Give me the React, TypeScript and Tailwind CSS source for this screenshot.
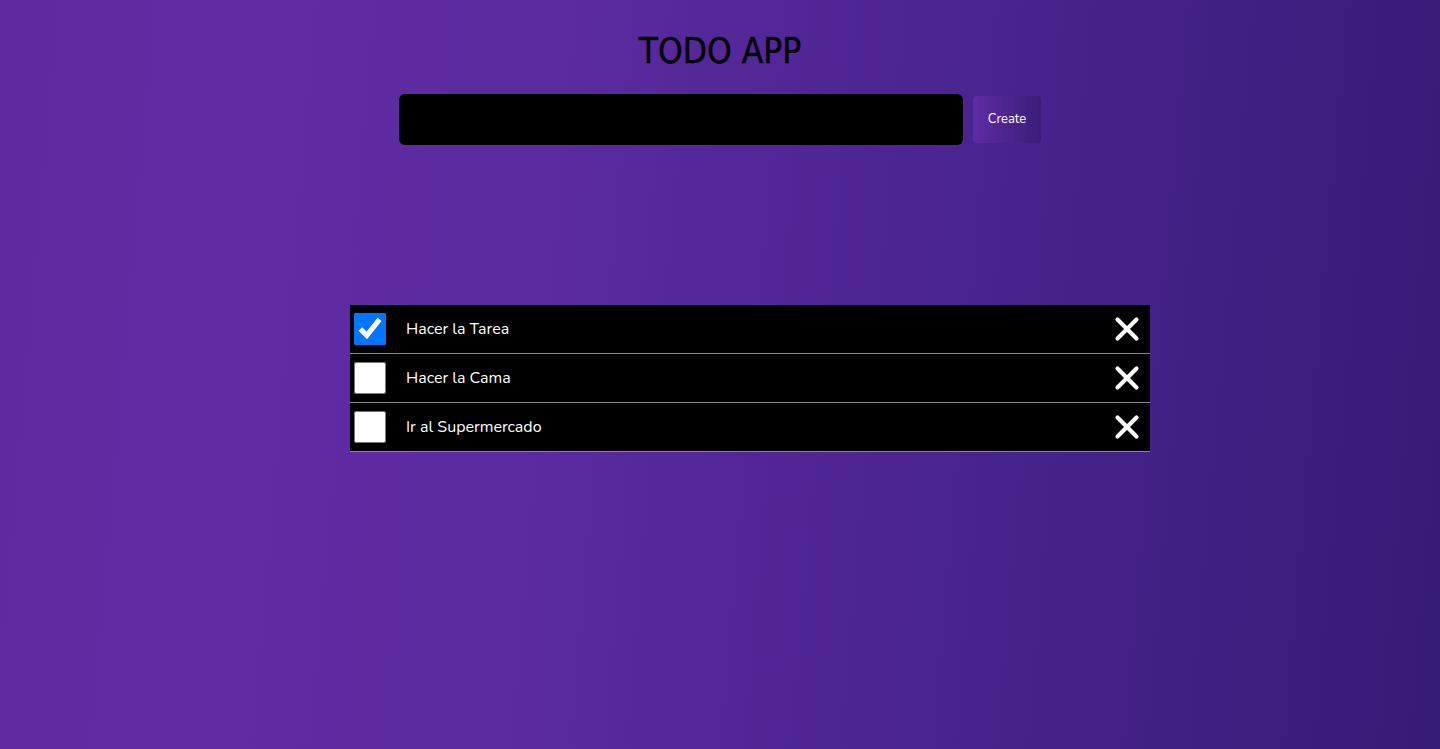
import React, { useState } from "react";

type Todo = { id: number; text: string; done: boolean };

const initial: Todo[] = [
  { id: 1, text: "Hacer la Tarea", done: true },
  { id: 2, text: "Hacer la Cama", done: false },
  { id: 3, text: "Ir al Supermercado", done: false },
];

function CloseIcon() {
  return (
    <svg width="26" height="26" viewBox="0 0 26 26" fill="none">
      <path d="M3.5 3.5L22.5 22.5M22.5 3.5L3.5 22.5" stroke="white" strokeWidth="4.2" strokeLinecap="round" />
    </svg>
  );
}

export default function App() {
  const [todos, setTodos] = useState<Todo[]>(initial);
  const [text, setText] = useState("");

  const toggle = (id: number) =>
    setTodos((t) => t.map((x) => (x.id === id ? { ...x, done: !x.done } : x)));

  const remove = (id: number) => setTodos((t) => t.filter((x) => x.id !== id));

  const create = () => {
    if (!text.trim()) return;
    setTodos((t) => [...t, { id: Date.now(), text, done: false }]);
    setText("");
  };

  return (
    <div
      className="min-h-screen w-full flex flex-col items-center bg-[linear-gradient(95deg,#5d2b9e_0%,#622ba4_15%,#5a2a9e_38%,#4a2490_65%,#361b75_100%)]"
      style={{ fontFamily: "Nunito, Lato, 'Open Sans', sans-serif" }}
    >
      {/* Header */}
      <h1 className="mt-[31px] text-[35px] leading-[40px] text-black font-['DejaVu_Sans',sans-serif] [font-stretch:condensed] [-webkit-text-stroke:0.4px_black]">
        TODO APP
      </h1>

      {/* New todo */}
      <div className="mt-[23px] flex items-center gap-[10px]">
        <input
          value={text}
          onChange={(e) => setText(e.target.value)}
          className="w-[564px] h-[51px] rounded-md bg-black text-white px-4 outline-none"
        />
        <button
          onClick={create}
          className="w-[68px] h-[47px] rounded-[4px] text-[13px] text-white bg-[linear-gradient(90deg,#5f2ba4,#3a1d79)]"
        >
          Create
        </button>
      </div>

      {/* List */}
      <ul className="mt-[160px] ml-[60px] w-[800px]">
        {todos.map((t) => (
          <li key={t.id} className="flex items-center h-[49px] bg-black border-b border-[#8a8a8a] pl-1 pr-[10px]">
            <input
              type="checkbox"
              checked={t.done}
              onChange={() => toggle(t.id)}
              className="w-8 h-8 m-0 cursor-pointer"
            />
            <span className="ml-5 text-base text-white">{t.text}</span>
            <button onClick={() => remove(t.id)} className="ml-auto p-0">
              <CloseIcon />
            </button>
          </li>
        ))}
      </ul>
    </div>
  );
}
